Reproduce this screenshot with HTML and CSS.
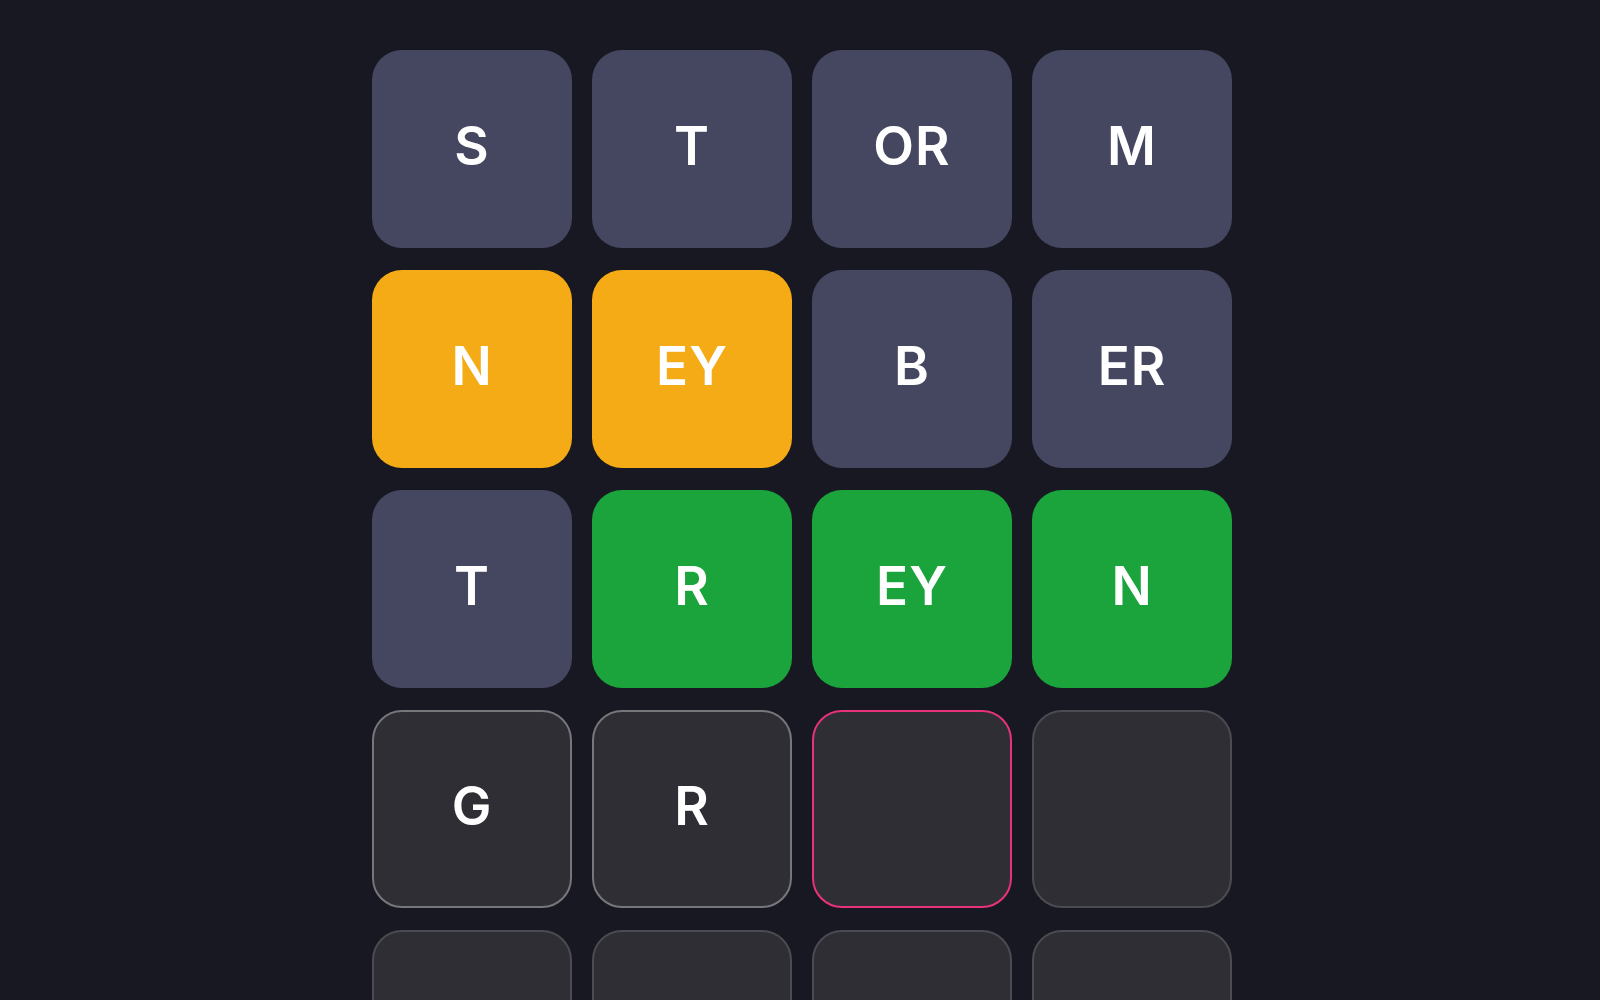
FILE: index.html
```html
<!DOCTYPE html>
<html lang="en">
<head>
  <meta charset="UTF-8" />
  <meta name="viewport" content="width=device-width, initial-scale=1.0"/>
  <title>Word Grid</title>
  <link rel="stylesheet" href="styles.css">
</head>
<body>
  <div class="board">
    <div class="tile used">S</div>
    <div class="tile used">T</div>
    <div class="tile used">OR</div>
    <div class="tile used">M</div>

    <div class="tile present">N</div>
    <div class="tile present">EY</div>
    <div class="tile used">B</div>
    <div class="tile used">ER</div>

    <div class="tile used">T</div>
    <div class="tile correct">R</div>
    <div class="tile correct">EY</div>
    <div class="tile correct">N</div>

    <div class="tile empty filled">G</div>
    <div class="tile empty filled">R</div>
    <div class="tile empty active"></div>
    <div class="tile empty"></div>

    <div class="tile empty"></div>
    <div class="tile empty"></div>
    <div class="tile empty"></div>
    <div class="tile empty"></div>
  </div>
</body>
</html>
```

FILE: styles.css
```css
html, body {
  margin: 0;
  height: 100%;
  overflow: hidden;
}
body {
  background-color: #181822;
  font-family: Inter, "Noto Sans", sans-serif;
  color: #fff;
}
.board {
  display: grid;
  grid-template-columns: repeat(4, 200px);
  grid-auto-rows: 198px;
  gap: 22px 20px;
  width: 860px;
  margin: 50px auto 0;
  padding-left: 4px;
}
.tile {
  display: flex;
  align-items: center;
  justify-content: center;
  padding-bottom: 6px;
  border-radius: 30px;
  font-size: 53px;
  font-weight: 600;
  letter-spacing: 1px;
  box-sizing: border-box;
}
.used {
  background-color: #44475f;
}
.present {
  background-color: #f5ab16;
}
.correct {
  background-color: #1ba33c;
}
.empty {
  background-color: #2e2e34;
  border: 2.5px solid #4b4b52;
}
.filled {
  border-color: #76767b;
}
.active {
  border-color: #e8327a;
}
```
